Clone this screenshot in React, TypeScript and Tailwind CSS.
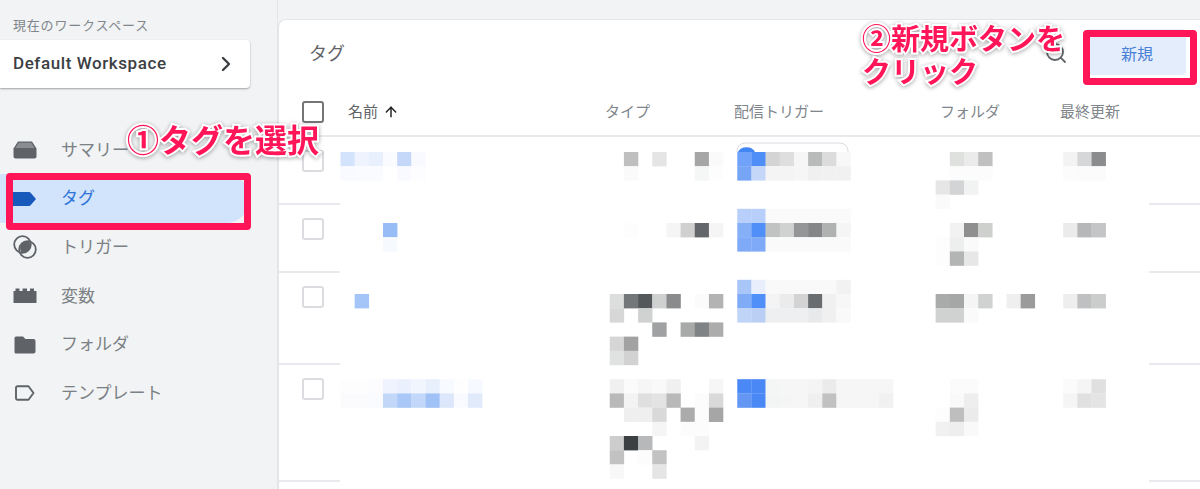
import React from 'react';
import { ArrowUp, ChevronRight, Search } from 'lucide-react';

type MosaicRow = [number, number, string[]];

// [row, first column, colours]: '' leaves the cell white
const mosaic: MosaicRow[] = [
  // name
  [0, 0, ['#d4e3fc', '#eef3fe', '#e9f0fd', '#fafbfe', '#c5d8fa', '#f8faff']],
  [1, 0, ['#f8faff', '#fafbff', '#fafbff', '', '#f8faff', '#fdfdff']],
  [5, 3, ['#97bcf6']],
  [6, 3, ['#f6f9fe']],
  [10, 1, ['#a3c5f8']],
  [16, 0, ['#fdfdfd', '#fdfdfd', '#fcfcfe', '#eef3fe', '#eaf0fe', '#f1f5fe', '#e9f0fd', '#f7faff', '#fefeff', '#f6f9ff']],
  [17, 0, ['#fbfbfd', '#fbfbfd', '#fafbfe', '#c3d7f9', '#a9c8f7', '#c2d7f9', '#9fc1f6', '#dce7fb', '#f8faff', '#e0eafb']],
  // type
  [0, 20, ['#bfbfbf', '', '#e5e5e5', '', '', '#a6a6a6', '#fafafa']],
  [1, 20, ['#fafafa', '', '', '', '', '#f5f6f6', '#fdfdfd']],
  [5, 20, ['#fdfdfd', '', '', '#f5f5f5', '#d0d0d0', '#63666a', '#f5f5f5']],
  [10, 19, ['#dcdddd', '#747779', '#54585a', '#cfd0d0', '#8a8b8c', '', '#fbfbfb', '#b3b3b3']],
  [11, 19, ['#d6d7d6', '', '#d0d1d1']],
  [12, 22, ['#a0a1a2', '', '#a8a9a9', '#7f8385', '#acacac']],
  [13, 19, ['#d6d6d6', '#a2a2a2']],
  [14, 19, ['#e0e1e1', '#d2d2d3']],
  [16, 19, ['#f0f0f0', '#fbfbfb', '#f6f6f6', '#f9f9f9', '#f0f0f0', '', '', '#f6f6f6']],
  [17, 19, ['#b8b9b8', '#f3f3f3', '#dedfde', '#e2e3e2', '#b8b9b8', '', '#fcfcfc', '#d8d9d8']],
  [18, 20, ['#efefef', '#efefef', '#d9d9d9', '', '#ababab', '#fcfcfc', '#a6a6a6']],
  [19, 22, ['#f5f5f5', '', '#fcfcfc', '#fcfcfc']],
  [20, 19, ['#cdcdcd', '#3c4043', '#b7b8b9', '', '', '', '#f2f3f2']],
  [21, 19, ['#c2c2c3', '', '#fcfcfc', '#c2c2c3']],
  [22, 19, ['#f8f8f8', '', '', '#e4e5e4']],
  // trigger
  [0, 28, ['#6fa2f8', '#4f8ef7', '#d3d4d3', '#dedede', '#f6f6f6', '#b9baba', '#dcdcdc', '#f8f8f8']],
  [1, 28, ['#76a5f6', '#c5d7f8', '#f4f4f4', '#f4f4f4', '#f6f6f6', '#f0f0f0', '#f1f1f1', '#f1f1f1']],
  [4, 28, ['#b7cffa', '#b7cffa', '#fafafa', '#fafafa', '#fafafa', '#fafafa', '#fafafa', '#fafafa']],
  [5, 28, ['#85b0f8', '#4f8ff7', '#c1c2c2', '#d0d1d1', '#959697', '#858688', '#b0b1b1', '#f5f5f5']],
  [6, 28, ['#7eaaf7', '#7eaaf7', '#fafafa', '#fafafa', '#fafafa', '#fafafa', '#fafafa', '#fafafa']],
  [9, 28, ['#a9c6f8', '#e8eefb', '#f9f9f9', '#f9f9f9', '#f9f9f9', '#f9f9f9', '#f9f9f9', '#f1f2f1']],
  [10, 28, ['#80abf7', '#4f8ff7', '#f4f4f4', '#eaebea', '#d2d3d2', '#6a6d70', '#f0f0f0', '#f7f7f7']],
  [11, 28, ['#c0d4f7', '#bacff3', '#eeeff0', '#eeeff0', '#eeeff0', '#e8e9ea', '#f0f0f1', '#f8f9f8']],
  [16, 28, ['#4a88f5', '#4a88f5', '#f4f5f5', '#f5f6f5', '#f6f6f6', '#f4f4f4', '#ebebeb', '#f6f6f6', '#f6f6f6', '#f6f6f6', '#f6f6f6']],
  [17, 28, ['#6497f3', '#4a88f5', '#f3f4f4', '#f5f5f5', '#f6f6f6', '#efefef', '#c1c1c1', '#f6f6f6', '#f6f6f6', '#f6f6f6', '#f1f1f1']],
  // folder
  [0, 43, ['#dfe1df', '#eaebea', '#bfc0bf']],
  [1, 43, ['#fcfcfc', '#fcfcfc', '#fcfcfc']],
  [2, 42, ['#e6e6e6', '#d3d4d6', '#f1f2f2']],
  [3, 42, ['#fafafa']],
  [5, 43, ['#f2f2f2', '#8f8f8f', '#ced0ce']],
  [6, 42, ['#fdfdfd', '#edefee', '#fafafa']],
  [7, 42, ['#fdfdfd', '#b3b4b4', '#e7e7e7']],
  [10, 42, ['#a9aaaa', '#a5a6a6', '#f5f5f5', '#d0d1d1', '', '#efefef', '#9b9b9b']],
  [11, 42, ['#d0d1d1', '#d0d1d1', '#fafafa']],
  [16, 43, ['#fbfbfb', '#fbfbfb']],
  [17, 43, ['#f9f9f9', '#eeeeee']],
  [18, 42, ['#fdfdfd', '#bdbebd', '#ebebeb']],
  [19, 42, ['#f1f1f1', '#eeeeee', '#f9f9f9']],
  // updated
  [0, 51, ['#f3f3f3', '#d6d7d8', '#8b8c8e']],
  [1, 51, ['#fcfcfc', '#fbfbfb', '#fbfbfb']],
  [5, 51, ['#ebebeb', '#b6b7b8', '#c4c5c6']],
  [10, 51, ['#eeeeee', '#bfc0c1', '#cbcccc']],
  [16, 51, ['#fbfbfb', '#f5f5f5', '#e0e0e0']],
  [17, 51, ['#f5f5f5', '#dfe0df', '#e3e4e3']],
];

const SummaryIcon = () => (
  <svg width="24" height="18" viewBox="0 0 24 18" className="shrink-0">
    <path d="M5 0.500h14l4.500 7v8a2 2 0 0 1-2 2h-19a2 2 0 0 1-2-2v-8z" fill="#5f6368" />
    <path d="M5.800 1.800h12.400l3.400 5.200H2.400z" fill="#8a8e92" />
  </svg>
);

const TagIcon = () => (
  <svg width="24" height="16" viewBox="0 0 24 16" className="shrink-0">
    <path d="M0 1h16a2 2 0 0 1 1.600 0.800L23 8l-5.400 6.200A2 2 0 0 1 16 15H0z" fill="#185abc" />
  </svg>
);

const TriggerIcon = () => (
  <svg width="24" height="24" viewBox="0 0 24 24" className="shrink-0">
    <circle cx="9.500" cy="9.500" r="8.300" fill="none" stroke="#5f6368" strokeWidth="1.800" />
    <circle cx="14.500" cy="14.500" r="8.300" fill="none" stroke="#5f6368" strokeWidth="1.800" />
    <path d="M7 12.500a8.300 8.300 0 0 1 9-6.500a8.300 8.300 0 0 1 1 6.500a8.300 8.300 0 0 1-8.500 5a8.300 8.300 0 0 1-1.500-5z" fill="#5f6368" />
  </svg>
);

const VariableIcon = () => (
  <svg width="24" height="15" viewBox="0 0 24 15" className="shrink-0">
    <path d="M0.500 3h2V0.500h4V3h3V0.500h4.500V3h3V0.500h4V3h2.500v12H0.500z" fill="#5f6368" />
  </svg>
);

const FolderIcon = () => (
  <svg width="22" height="18" viewBox="0 0 22 18" className="shrink-0">
    <path d="M2 0.500h7l2.500 2.500H19.500a2 2 0 0 1 2 2v10.500a2 2 0 0 1-2 2H2a1.500 1.500 0 0 1-1.500-1.500V2a1.500 1.500 0 0 1 1.500-1.500z" fill="#5f6368" />
  </svg>
);

const TemplateIcon = () => (
  <svg width="20" height="16" viewBox="0 0 20 16" className="shrink-0">
    <path d="M2.500 1.200h11l5 6.800-5 6.800h-11a1.500 1.500 0 0 1-1.500-1.500V2.700a1.500 1.500 0 0 1 1.500-1.500z" fill="none" stroke="#5f6368" strokeWidth="1.900" strokeLinejoin="round" />
  </svg>
);

const navItems = [
  { label: 'サマリー', icon: <SummaryIcon />, pad: 'pl-[12.500px]' },
  { label: 'タグ', icon: <TagIcon />, pad: 'pl-[12.500px]', active: true },
  { label: 'トリガー', icon: <TriggerIcon />, pad: 'pl-[12.500px]' },
  { label: '変数', icon: <VariableIcon />, pad: 'pl-[12.500px]' },
  { label: 'フォルダ', icon: <FolderIcon />, pad: 'pl-[14px]' },
  { label: 'テンプレート', icon: <TemplateIcon />, pad: 'pl-[15px]' },
];

const Sidebar = () => (
  <aside className="w-[278px] shrink-0 bg-[#f1f3f4] border-r border-[#e3e5e8]">
    <p className="pl-[13px] pt-[17px] h-[40px] text-[13px] leading-[17px] text-[#80868b] tracking-[0.8px]">現在のワークスペース</p>
    <div className="w-[250px] h-[48px] bg-white rounded-r-[4px] shadow-[0_1px_2px_rgba(60,64,67,0.45)] flex items-center justify-between pl-[13px] pr-[12px]">
      <span className="font-medium text-[17px] text-[#3c4043] tracking-[0.58px]">Default Workspace</span>
      <ChevronRight size={24} strokeWidth={2.400} className="text-[#3c4043]" />
    </div>
    <nav className="mt-[37.500px]">
      {navItems.map((item) => (
        <div
          key={item.label}
          className={`h-[48.700px] w-[250px] rounded-r-full flex items-center gap-[24px] ${item.pad} ${item.active ? 'bg-[#d2e3fc]' : ''}`}
        >
          {item.icon}
          <span
            className={`absolute left-[61px] text-[17px] mt-[1px] ${item.active ? 'text-[#2f74d8]' : 'text-[#7b8084]'}`}
          >
            {item.label}
          </span>
        </div>
      ))}
    </nav>
  </aside>
);

const rowHeights = ['h-[68px]', 'h-[68px]', 'h-[92px]', 'h-[117px]'];

const Table = () => (
  <div>
    <div className="h-[49px] pt-[1px] border-b-2 border-[#e8eaed] grid grid-cols-[69px_257px_129px_206px_120px_1fr] items-center text-[15px] text-[#80868b]">
      <div className="pl-[23px]">
        <div className="w-[22px] h-[22px] border-2 border-[#757575] rounded-[3px]" />
      </div>
      <div className="flex items-center gap-[5px] text-[#5f6368]">
        名前 <ArrowUp size={16} strokeWidth={2.200} className="text-[#202124]" />
      </div>
      <div>タイプ</div>
      <div>配信トリガー</div>
      <div>フォルダ</div>
      <div>最終更新</div>
    </div>
    {rowHeights.map((h, i) => (
      <div key={i} className={`${h} border-b-2 border-[#e8eaed] pl-[23px] pt-[13px]`}>
        <div className="w-[22px] h-[22px] border-2 border-[#dadce0] rounded-[3px]" />
      </div>
    ))}
  </div>
);

// pixelated rows lying over the table
const Mosaic = () => (
  <svg width="809" height="352" viewBox="340 137 809 352" className="absolute left-[340px] top-[137px]">
    <rect x="340" y="137" width="809" height="352" fill="#fff" />
    <path d="M737 152v-1a8 8 0 0 1 8-8h95a8 8 0 0 1 8 8v1" fill="none" stroke="#dadce0" strokeWidth="1" />
    <path d="M738 152a9 7 0 0 1 17 0z" fill="#4285f4" />
    {mosaic.map(([row, col, colors]) =>
      colors.map((c, i) =>
        c ? (
          <rect
            key={`${row}-${col + i}`}
            x={340.5 + (col + i) * 14.17}
            y={152 + row * 14.2}
            width={14.4}
            height={14.4}
            fill={c}
          />
        ) : null,
      ),
    )}
  </svg>
);

const noteText = "font-bold text-[#ff1558] [-webkit-text-stroke:4px_white] [paint-order:stroke_fill] drop-shadow-[0_1px_2px_rgba(0,0,0,0.35)]";

export default function App() {
  return (
    <div className="relative w-[1200px] h-[489px] overflow-hidden flex bg-[#f1f3f4] font-[Roboto,'Noto_Sans_CJK_JP',sans-serif]">
      <Sidebar />

      <main className="flex-1 pt-[19px]">
        <div className="h-[470px] bg-white rounded-tl-[8px] border-t border-l border-[#e3e5e8] overflow-hidden">
          <div className="h-[68px] flex items-start justify-between pl-[30px] pr-[14px]">
            <h2 className="text-[18px] leading-[26px] mt-[21px] text-[#5f6368]">タグ</h2>
            <div className="flex items-start gap-[18px]">
              <Search size={24} strokeWidth={1.800} className="text-[#5f6368] mt-[21px]" />
              <button className="w-[100px] h-[46px] mt-[9px] pt-[6px] pl-[2px] bg-[#e3edfc] rounded-[4px] text-[16px] text-[#4a7fd6]">新規</button>
            </div>
          </div>
          <Table />
        </div>
      </main>

      <Mosaic />

      {/* red frames and notes added on top of the screenshot */}
      <div className="absolute left-[6px] top-[173px] w-[245px] h-[56.500px] border-[7px] border-[#ff1558] rounded-[4px]" />
      <div className="absolute left-[1083px] top-[30px] w-[114px] h-[55px] border-[7px] border-[#ff1558] rounded-[4px]" />
      <div className={`absolute left-[127px] top-[120px] text-[32px] leading-[42px] whitespace-nowrap ${noteText}`}>①タグを選択</div>
      <div className={`absolute left-[862px] top-[24px] text-[29px] leading-[32.500px] whitespace-nowrap ${noteText}`}>
        ②新規ボタンを
        <br />
        クリック
      </div>
    </div>
  );
}
